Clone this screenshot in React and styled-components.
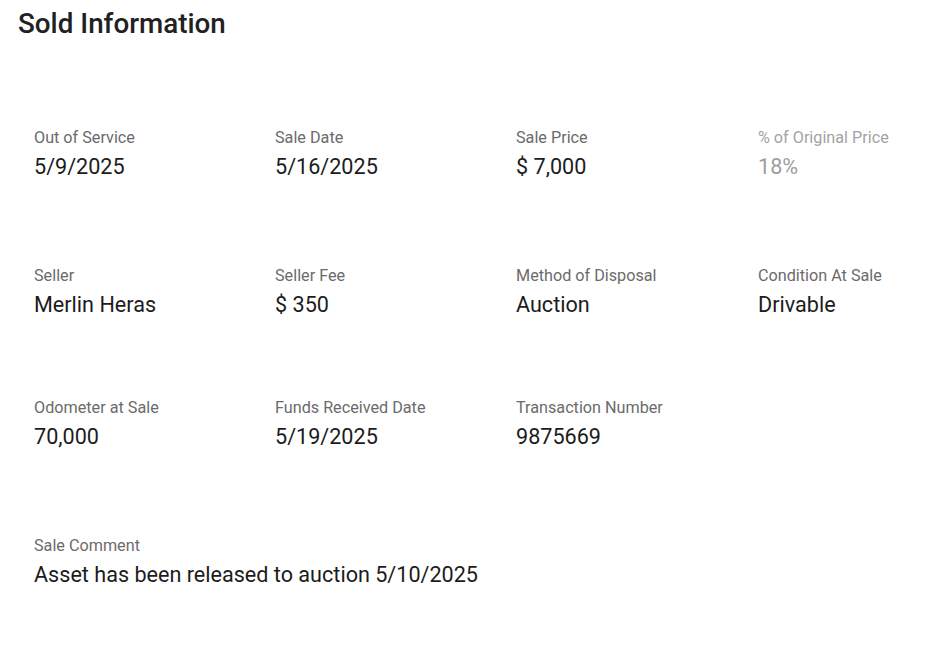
import React from 'react';
import styled, { createGlobalStyle } from 'styled-components';

const GlobalStyle = createGlobalStyle`
    body {
        margin: 0;
        background: #ffffff;
        font-family: Roboto, "Liberation Sans", Arial, sans-serif;
    }
`;

const Page = styled.div`
    width: 948px;
    min-height: 649px;
    box-sizing: border-box;
    padding: 8px 0 0 0;
    overflow: hidden;
`;

const Title = styled.h2`
    margin: 0 0 0 18px;
    font-size: 27.8px;
    line-height: 32px;
    font-weight: 500;
    color: #212121;
`;

const Row = styled.div`
    display: grid;
    grid-template-columns: 241px 241px 242px 1fr;
    padding-left: 34px;
    margin-top: ${props => props.$top}px;
`;

const Field = styled.div`
    display: flex;
    flex-direction: column;
    gap: 5px;
    grid-column: ${props => (props.$wide ? '1 / -1' : 'auto')};
`;

const Label = styled.span`
    font-size: 16.2px;
    line-height: 20px;
    color: ${props => (props.$muted ? '#a3a3a3' : '#6b6b6b')};
`;

const Value = styled.span`
    font-size: 21.6px;
    line-height: 28px;
    color: ${props => (props.$muted ? '#9e9e9e' : '#1c1c1c')};
`;

const rows = [
    {
        top: 88,
        fields: [
            { label: 'Out of Service', value: '5/9/2025' },
            { label: 'Sale Date', value: '5/16/2025' },
            { label: 'Sale Price', value: '$ 7,000' },
            { label: '% of Original Price', value: '18%', muted: true },
        ],
    },
    {
        top: 85,
        fields: [
            { label: 'Seller', value: 'Merlin Heras' },
            { label: 'Seller Fee', value: '$ 350' },
            { label: 'Method of Disposal', value: 'Auction' },
            { label: 'Condition At Sale', value: 'Drivable' },
        ],
    },
    {
        top: 79,
        fields: [
            { label: 'Odometer at Sale', value: '70,000' },
            { label: 'Funds Received Date', value: '5/19/2025' },
            { label: 'Transaction Number', value: '9875669' },
        ],
    },
    {
        top: 85,
        fields: [
            { label: 'Sale Comment', value: 'Asset has been released to auction 5/10/2025', wide: true },
        ],
    },
];

const App = () => {
    return (
        <Page>
            <GlobalStyle />
            <Title>Sold Information</Title>
            {rows.map((row, i) => (
                <Row key={i} $top={row.top}>
                    {row.fields.map(field => (
                        <Field key={field.label} $wide={field.wide}>
                            <Label $muted={field.muted}>{field.label}</Label>
                            <Value $muted={field.muted}>{field.value}</Value>
                        </Field>
                    ))}
                </Row>
            ))}
        </Page>
    );
};

export default App;
